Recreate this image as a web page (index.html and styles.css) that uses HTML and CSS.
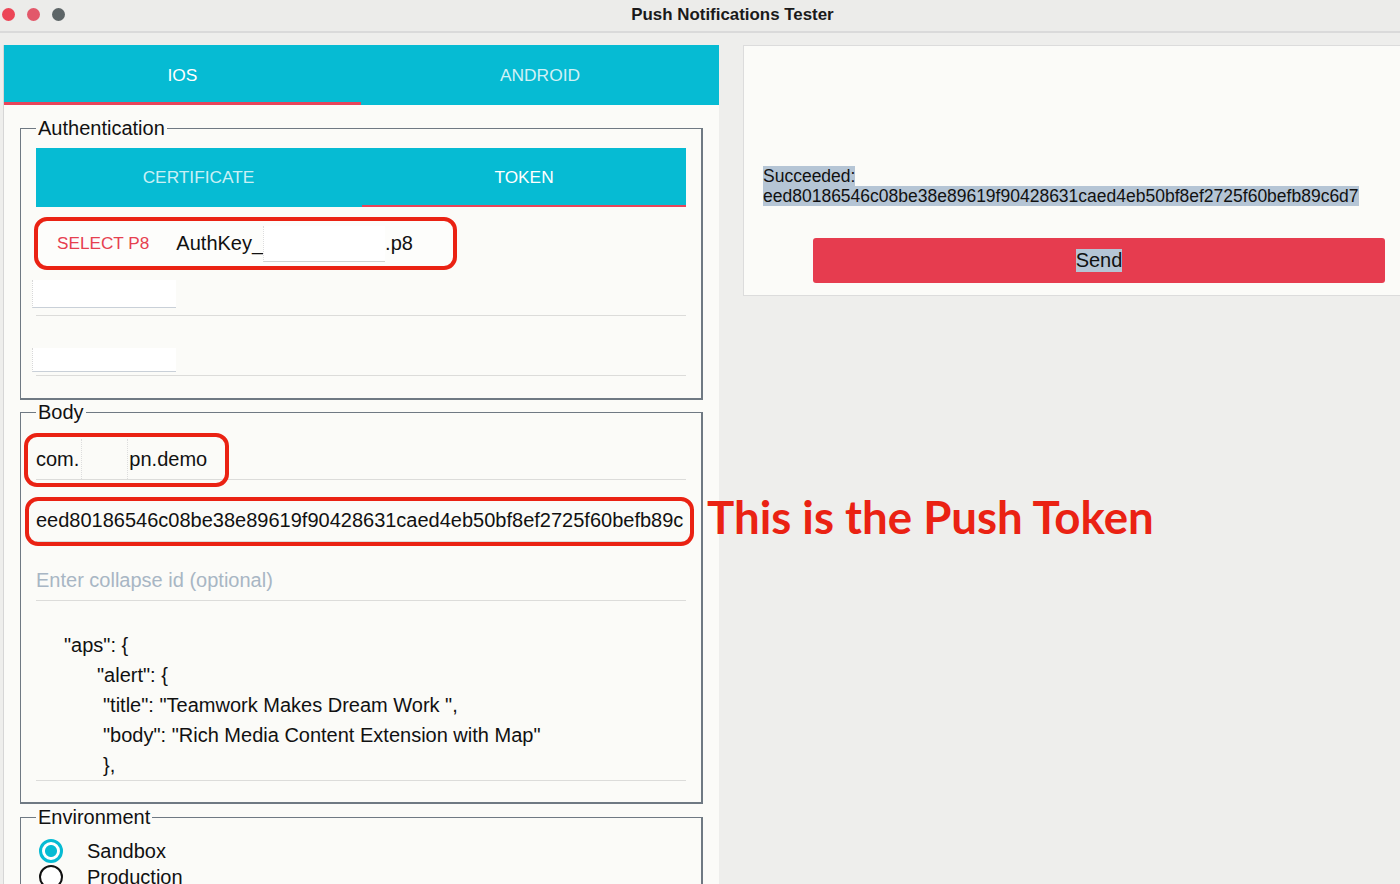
FILE: index.html
```html
<!DOCTYPE html>
<html>
<head>
<meta charset="utf-8">
<title>Push Notifications Tester</title>
<link rel="stylesheet" href="styles.css">
</head>
<body>
<div class="titlebar">
  <div class="lights"><span class="light l-close"></span><span class="light l-min"></span><span class="light l-max"></span></div>
  <div class="title">Push Notifications Tester</div>
</div>
<div class="main">
  <div class="left">
    <div class="tabs"><div class="tab active">IOS</div><div class="tab">ANDROID</div></div>
    <div class="panel">
      <fieldset class="group auth">
        <legend>Authentication</legend>
        <div class="subtabs"><div class="subtab">CERTIFICATE</div><div class="subtab active">TOKEN</div></div>
        <div class="p8-row">
          <span class="select-btn">SELECT P8</span>
          <span class="file">AuthKey_</span><span class="redact"></span><span class="file">.p8</span>
        </div>
        <div class="blank-row r1"><span class="blank-box"></span></div>
        <div class="blank-row r2"><span class="blank-box"></span></div>
      </fieldset>
      <fieldset class="group bodyset">
        <legend>Body</legend>
        <div class="field topic"><span>com.</span><span class="redact-sm"></span><span>pn.demo</span><div class="mark mark-topic"></div></div>
        <div class="field token"><span class="token-text">eed80186546c08be38e89619f90428631caed4eb50bf8ef2725f60befb89c</span><div class="mark mark-token"></div></div>
        <div class="field collapse"><span class="placeholder">Enter collapse id (optional)</span></div>
        <div class="json">
          <div class="jl i1">"aps": {</div>
          <div class="jl i2">"alert": {</div>
          <div class="jl i3">"title": "Teamwork Makes Dream Work ",</div>
          <div class="jl i3">"body": "Rich Media Content Extension with Map"</div>
          <div class="jl i3">},</div>
        </div>
      </fieldset>
      <fieldset class="group envset">
        <legend>Environment</legend>
        <div class="radio-row"><span class="radio on"></span><span>Sandbox</span></div>
        <div class="radio-row"><span class="radio"></span><span>Production</span></div>
      </fieldset>
    </div>
  </div>
  <div class="card">
    <div class="result"><span class="sel">Succeeded:<br>eed80186546c08be38e89619f90428631caed4eb50bf8ef2725f60befb89c6d7</span></div>
    <div class="send"><span class="sel">Send</span></div>
  </div>
</div>
<div class="callout">This is the Push Token</div>
</body>
</html>
```
FILE: styles.css
```css
html, body {
  margin: 0;
  padding: 0;
}
body {
  width: 1400px;
  height: 884px;
  overflow: hidden;
  position: relative;
  background: #eeeeec;
  font-family: "Liberation Sans", Arial, sans-serif;
  color: #111;
}

/* title bar */
.titlebar {
  height: 31px;
  border-bottom: 2px solid #dadada;
  background: #ececea;
  display: flex;
  align-items: flex-start;
}
.lights {
  display: flex;
  gap: 12px;
  padding-left: 2px;
  margin-top: 8px;
}
.light {
  width: 13px;
  height: 13px;
  border-radius: 50%;
  display: block;
}
.l-close { background: #ec4657; }
.l-min { background: #e2586a; }
.l-max { background: #5d6567; }
.title {
  flex: 1;
  text-align: center;
  font-weight: bold;
  font-size: 16.9px;
  line-height: 19px;
  margin-top: 5px;
  color: #1a1a1a;
}

/* main */
.main {
  display: flex;
  padding-top: 12px;
}
.left {
  width: 715px;
  margin-left: 3px;
  border-left: 1px solid #d6d6d6;
  background: #fbfbf8;
  height: 839px;
}
.tabs {
  display: flex;
  height: 60px;
  background: #06bbd3;
}
.tab {
  flex: 0 0 357px;
  display: flex;
  align-items: center;
  justify-content: center;
  font-size: 17.4px;
  color: rgba(255, 255, 255, 0.82);
}
.tab + .tab { flex-basis: 358px; }
.tab.active {
  color: #fff;
  box-shadow: inset 0 -3px 0 #e8455a;
}

.panel {
  padding-top: 12px;
}
.group {
  margin: 1px 16px 0;
  padding: 8px 15px 0;
  border: 1px solid #6f7983;
  border-right-width: 2px;
  border-bottom-width: 2px;
  width: 650px;
  box-sizing: content-box;
}
.group.auth { margin-top: 0; padding-bottom: 22px; }
.group.bodyset { padding-top: 7px; padding-bottom: 21px; }
.group.envset { padding-top: 9px; padding-bottom: 40px; margin-top: 2px; }
.group legend {
  font-size: 20px;
  line-height: 23px;
  padding: 0 2px;
  color: #111;
}

/* auth */
.subtabs {
  display: flex;
  height: 59px;
  background: #06bbd3;
}
.subtab {
  flex: 0 0 325px;
  display: flex;
  align-items: center;
  justify-content: center;
  font-size: 17.3px;
  color: rgba(255, 255, 255, 0.8);
}
.subtab.active {
  color: #fff;
  box-shadow: inset 0 -2px 0 #e8455a;
  flex-basis: 324px;
  margin-left: 1px;
}
.p8-row {
  margin: 10px 0 0 -2px;
  width: 415px;
  height: 45px;
  border: 4px solid #ea2213;
  border-radius: 13px;
  display: flex;
  align-items: center;
  background: #fdfdfb;
}
.select-btn {
  color: #e6404f;
  font-size: 17.2px;
  margin-left: 19px;
  margin-right: 27px;
}
.file {
  font-size: 20px;
}
.redact {
  width: 122px;
  height: 36px;
  background: #fff;
  border-bottom: 1px solid #d0d0d0;
  border-left: 1px dotted #ddd;
  box-sizing: border-box;
}
.blank-row {
  border-bottom: 1px solid #dcdcda;
}
.blank-row.r1 { padding: 10px 0 7px; }
.blank-row.r2 { padding: 32px 0 3px; }
.blank-box {
  display: block;
  margin-left: -4px;
  width: 144px;
  background: #fff;
  border-left: 1px dotted #d8d8d8;
  border-bottom: 1px solid #c9d0d8;
  box-sizing: border-box;
}
.r1 .blank-box { height: 28px; }
.r2 .blank-box { height: 24px; }

/* body */
.field {
  position: relative;
  display: flex;
  align-items: flex-end;
  padding-bottom: 8px;
  font-size: 20px;
  line-height: 24px;
  border-bottom: 1px solid #dcdcda;
  box-sizing: border-box;
}
.field.topic { height: 49px; }
.field.token { height: 62px; padding-bottom: 9px; }
.field.collapse { height: 59px; }
.redact-sm {
  width: 45px;
  height: 40px;
  margin: 0 1px 0 2px;
  border-left: 1px dotted #ddd;
  border-right: 1px dotted #ddd;
  align-self: flex-end;
  margin-bottom: -8px;
}
.token-text {
  display: block;
  white-space: nowrap;
}
.placeholder {
  color: #a8b6c4;
}
.mark {
  position: absolute;
  border: 4px solid #ea2213;
  border-radius: 13px;
}
.mark-topic {
  left: -12px;
  top: 2px;
  width: 197px;
  height: 46px;
}
.mark-token {
  left: -11px;
  top: 17px;
  width: 661px;
  height: 41px;
}
.json {
  padding-top: 29px;
  border-bottom: 1px solid #dcdcda;
  font-size: 20px;
  line-height: 30px;
}
.jl.i1 { padding-left: 28px; }
.jl.i2 { padding-left: 61px; }
.jl.i3 { padding-left: 67px; }

/* environment */
.radio-row {
  display: flex;
  align-items: center;
  height: 26px;
  font-size: 20px;
}
.radio {
  width: 24px;
  height: 24px;
  box-sizing: border-box;
  border-radius: 50%;
  border: 2.5px solid #111;
  margin: 0 24px 0 3px;
  background: #fff;
}
.radio.on {
  border: 3px solid #06bbd3;
  background: radial-gradient(circle, #06bbd3 0 5.5px, #fff 6.5px);
}

/* right card */
.card {
  margin-left: 24px;
  flex: 1;
  height: 251px;
  background: #fbfbf8;
  border: 1px solid #dcdcdc;
  border-right: none;
  padding: 120px 0 0 19px;
  box-sizing: border-box;
}
.result {
  font-size: 17.5px;
  line-height: 20px;
  color: #111;
}
.sel {
  background: #b5c5d5;
}
.send {
  margin: 32px 15px 0 50px;
  height: 45px;
  border-radius: 3px;
  background: #e63c4f;
  display: flex;
  align-items: center;
  justify-content: center;
  font-size: 20px;
  color: #111;
}

/* annotation */
.callout {
  position: absolute;
  left: 707px;
  top: 494px;
  font-family: Lato, "Open Sans", sans-serif;
  font-weight: 700;
  font-size: 45.6px;
  line-height: 45px;
  color: #ea2213;
  white-space: nowrap;
}
```
